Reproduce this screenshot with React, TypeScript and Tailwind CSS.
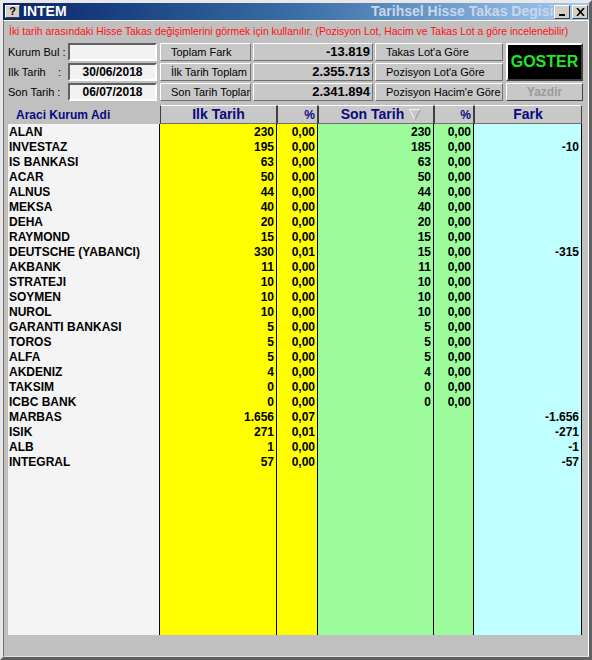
const rows: [string, string, string, string, string, string][] = [
  ['ALAN', '230', '0,00', '230', '0,00', ''],
  ['INVESTAZ', '195', '0,00', '185', '0,00', '-10'],
  ['IS BANKASI', '63', '0,00', '63', '0,00', ''],
  ['ACAR', '50', '0,00', '50', '0,00', ''],
  ['ALNUS', '44', '0,00', '44', '0,00', ''],
  ['MEKSA', '40', '0,00', '40', '0,00', ''],
  ['DEHA', '20', '0,00', '20', '0,00', ''],
  ['RAYMOND', '15', '0,00', '15', '0,00', ''],
  ['DEUTSCHE (YABANCI)', '330', '0,01', '15', '0,00', '-315'],
  ['AKBANK', '11', '0,00', '11', '0,00', ''],
  ['STRATEJI', '10', '0,00', '10', '0,00', ''],
  ['SOYMEN', '10', '0,00', '10', '0,00', ''],
  ['NUROL', '10', '0,00', '10', '0,00', ''],
  ['GARANTI BANKASI', '5', '0,00', '5', '0,00', ''],
  ['TOROS', '5', '0,00', '5', '0,00', ''],
  ['ALFA', '5', '0,00', '5', '0,00', ''],
  ['AKDENIZ', '4', '0,00', '4', '0,00', ''],
  ['TAKSIM', '0', '0,00', '0', '0,00', ''],
  ['ICBC BANK', '0', '0,00', '0', '0,00', ''],
  ['MARBAS', '1.656', '0,07', '', '', '-1.656'],
  ['ISIK', '271', '0,01', '', '', '-271'],
  ['ALB', '1', '0,00', '', '', '-1'],
  ['INTEGRAL', '57', '0,00', '', '', '-57'],
]

const raised = 'border border-t-white border-l-white border-b-[#707070] border-r-[#707070]'
const sunken = 'border-2 border-t-[#606060] border-l-[#606060] border-b-white border-r-white'

function Field({ value }: { value: string }) {
  return (
    <div className={`flex h-[18px] w-[89px] items-center justify-center bg-[#f2f2f2] text-[12px] font-bold ${sunken}`}>
      {value}
    </div>
  )
}

function PanelButton({ label }: { label: string }) {
  return (
    <div className={`flex h-[18px] items-center overflow-hidden whitespace-nowrap bg-[#c8c8c8] pl-[10px] text-[11px] ${raised}`}>
      {label}
    </div>
  )
}

function ValueBox({ value }: { value: string }) {
  return (
    <div className={`flex h-[18px] w-[120px] items-center justify-end bg-[#c8c8c8] pr-[2px] text-[13px] font-bold ${raised}`}>
      {value}
    </div>
  )
}

function Column({
  index,
  width,
  bg,
  align,
}: {
  index: number
  width: string
  bg: string
  align: 'left' | 'right'
}) {
  return (
    <div className={`flex flex-col border-r border-black pt-[1px] ${width} ${bg}`}>
      {rows.map((r, i) => (
        <div
          key={i}
          className={`h-[15px] whitespace-nowrap text-[12px] font-bold leading-[15px] ${
            align === 'right' ? 'pr-[2px] text-right' : 'pl-[1px] text-left'
          }`}
        >
          {r[index]}
        </div>
      ))}
    </div>
  )
}

function HeaderCell({ width, children, justify }: { width: string; children: React.ReactNode; justify: string }) {
  return (
    <div className={`flex h-[19px] items-center bg-[#c8c8c8] px-[2px] font-bold text-[#0a0a80] ${justify} ${width} border border-t-white border-l-[#404040] border-b-[#707070] border-r-[#404040]`}>
      {children}
    </div>
  )
}

export default function App() {
  return (
    <div
      className="flex h-[660px] w-[592px] flex-col overflow-hidden border-[3px] border-t-[#e8e8e8] border-l-[#e8e8e8] border-b-[#606060] border-r-[#606060] bg-[#c0c0c0] text-black"
      style={{ fontFamily: '"Liberation Sans", Arial, sans-serif' }}
    >
      {/* title bar */}
      <div className="relative flex h-[17px] items-center bg-gradient-to-r from-[#0a246a] via-[#3a6ea5] to-[#a6caf0] pl-[2px]">
        <div className="flex h-[13px] w-[15px] items-center justify-center border border-t-white border-l-white border-b-[#404040] border-r-[#404040] bg-[#d4d0c8] text-[11px] font-bold leading-none text-black">
          ?
        </div>
        <span className="ml-[3px] text-[14px] font-bold text-white">INTEM</span>
        <span className="absolute left-[368px] top-0 text-[14px] font-bold leading-[17px] text-[#c8d8ea]">
          Tarihsel Hisse Takas Degisim
        </span>
        <div className="absolute right-[1px] top-[2px] flex gap-[2px]">
          <div className="flex h-[14px] w-[16px] items-end justify-center border border-t-white border-l-white border-b-[#404040] border-r-[#404040] bg-[#d4d0c8] pb-[2px]">
            <div className="h-[2px] w-[6px] bg-black" />
          </div>
          <div className="flex h-[14px] w-[16px] items-center justify-center border border-t-white border-l-white border-b-[#404040] border-r-[#404040] bg-[#d4d0c8]">
            <svg width="9" height="8" viewBox="0 0 9 8">
              <path d="M1 0 L8 8 M8 0 L1 8" stroke="black" strokeWidth="1.6" />
            </svg>
          </div>
        </div>
      </div>

      {/* client area */}
      <div className="flex flex-1 flex-col border border-t-white border-l-[#707070] border-r-white border-b-[#e0e0e0] pl-[4px] pr-[5px]">
        <div className="h-[20px] whitespace-nowrap pl-[1px] pt-[4px] text-[10.4px] leading-[14px] text-[#ff1010]">
          İki tarih arasındaki Hisse Takas değişimlerini görmek için kullanılır. (Pozisyon Lot, Hacim ve Takas Lot a göre incelenebilir)
        </div>

        <div className="mt-[2px] flex">
          <div className="flex flex-col gap-[2px]">
            <div className="flex items-center">
              <span className="w-[60px] text-[11px]">Kurum Bul :</span>
              <Field value="" />
            </div>
            <div className="flex items-center">
              <span className="w-[60px] whitespace-pre text-[11px]">Ilk Tarih    :</span>
              <Field value="30/06/2018" />
            </div>
            <div className="flex items-center">
              <span className="w-[60px] whitespace-pre text-[11px]">Son Tarih :</span>
              <Field value="06/07/2018" />
            </div>
          </div>

          <div className="ml-[3px] flex flex-col gap-[2px]">
            <div className="flex gap-[2px]">
              <div className="w-[91px]"><PanelButton label="Toplam Fark" /></div>
              <ValueBox value="-13.819" />
              <div className="w-[128px]"><PanelButton label="Takas Lot'a Göre" /></div>
            </div>
            <div className="flex gap-[2px]">
              <div className="w-[91px]"><PanelButton label="İlk Tarih Toplam" /></div>
              <ValueBox value="2.355.713" />
              <div className="w-[128px]"><PanelButton label="Pozisyon Lot'a Göre" /></div>
            </div>
            <div className="flex gap-[2px]">
              <div className="w-[91px]"><PanelButton label="Son Tarih Toplam" /></div>
              <ValueBox value="2.341.894" />
              <div className="w-[128px]"><PanelButton label="Pozisyon Hacim'e Göre" /></div>
            </div>
          </div>

          <div className="ml-[3px] flex w-[79px] flex-col gap-[2px]">
            <div className="flex h-[38px] items-center justify-center border-2 border-t-white border-l-white border-b-[#404040] border-r-[#404040] bg-black text-[16px] font-bold text-[#22e622]">
              GOSTER
            </div>
            <div className="flex h-[18px] items-center justify-center border border-t-white border-l-white border-b-[#404040] border-r-[#404040] bg-[#c8c8c8] text-[12px] font-bold text-[#9a9a9a]">
              Yazdir
            </div>
          </div>
        </div>

        {/* grid */}
        <div className="mt-[4px] flex flex-1 flex-col">
          <div className="flex">
            <div className="flex h-[19px] w-[152px] items-center pl-[8px] text-[12px] font-bold text-[#0a0a80]">
              Araci Kurum Adi
            </div>
            <HeaderCell width="w-[117px]" justify="justify-center">
              <span className="text-[14px]">Ilk Tarih</span>
            </HeaderCell>
            <HeaderCell width="w-[41px]" justify="justify-end">
              <span className="text-[12px]">%</span>
            </HeaderCell>
            <HeaderCell width="w-[116px]" justify="justify-center">
              <span className="ml-[10px] text-[14px]">Son Tarih</span>
              <svg className="ml-[5px]" width="12" height="11" viewBox="0 0 12 11">
                <path d="M0.5 0.5 H11.5 L6 10.5 Z" fill="none" stroke="#f4f4f4" strokeWidth="1" />
                <path d="M11.5 0.5 L6 10.5" stroke="#808080" strokeWidth="1" />
              </svg>
            </HeaderCell>
            <HeaderCell width="w-[40px]" justify="justify-end">
              <span className="text-[12px]">%</span>
            </HeaderCell>
            <HeaderCell width="w-[108px]" justify="justify-center">
              <span className="text-[14px]">Fark</span>
            </HeaderCell>
          </div>

          <div className="flex h-[511px]">
            <Column index={0} width="w-[152px]" bg="bg-[#f4f4f4]" align="left" />
            <Column index={1} width="w-[117px]" bg="bg-[#ffff00]" align="right" />
            <Column index={2} width="w-[41px]" bg="bg-[#ffff00]" align="right" />
            <Column index={3} width="w-[116px]" bg="bg-[#9cfc9c]" align="right" />
            <Column index={4} width="w-[40px]" bg="bg-[#9cfc9c]" align="right" />
            <Column index={5} width="w-[108px]" bg="bg-[#c0ffff]" align="right" />
          </div>
        </div>
      </div>
    </div>
  )
}
